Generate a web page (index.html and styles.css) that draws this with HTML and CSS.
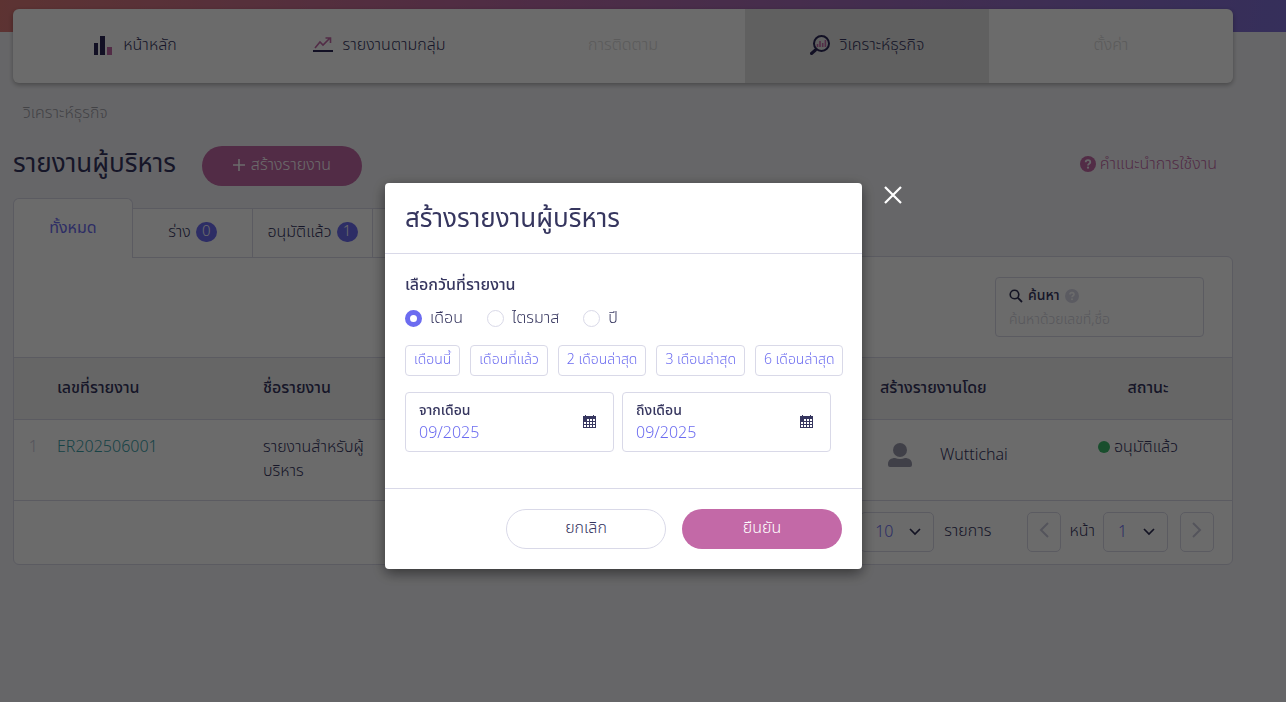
FILE: index.html
```html
<!DOCTYPE html>
<html lang="th">
<head>
  <meta charset="UTF-8" />
  <meta name="viewport" content="width=device-width, initial-scale=1.0"/>
  <title>รายงานผู้บริหาร</title>
  <link rel="stylesheet" href="styles.css">
</head>
<body>

  <div class="top-strip"></div>

  <div class="page">
    <nav class="main-nav">
      <a href="#" class="nav-item">
        <svg width="20" height="20" viewBox="0 0 20 20"><path fill="#2c2757" d="M1 8h4v12H1zM7 1h5v19H7z"/><path fill="#c369a7" d="M14 12h5v8h-5z"/></svg>
        <span>หน้าหลัก</span>
      </a>
      <a href="#" class="nav-item">
        <svg width="20" height="20" viewBox="0 0 20 20"><path fill="none" stroke="#c369a7" stroke-width="1.6" d="M2 13l5-6 3 3 7-7M12.500 3H17.500V8"/><path stroke="#2c2757" stroke-width="2" d="M0 16h20"/></svg>
        <span>รายงานตามกลุ่ม</span>
      </a>
      <a href="#" class="nav-item disabled"><span>การติดตาม</span></a>
      <a href="#" class="nav-item active">
        <svg width="20" height="20" viewBox="0 0 20 20"><circle cx="11.500" cy="8.500" r="7.500" fill="none" stroke="#2c2757" stroke-width="2"/><path stroke="#2c2757" stroke-width="3" stroke-linecap="round" d="M5.500 15L1.500 18.500"/><path stroke="#c369a7" stroke-width="1.600" d="M7.500 12V9M10 12V6M12.700 12V8M15.400 12V5"/></svg>
        <span>วิเคราะห์ธุรกิจ</span>
      </a>
      <a href="#" class="nav-item disabled"><span>ตั้งค่า</span></a>
    </nav>

    <div class="breadcrumb">วิเคราะห์ธุรกิจ</div>

    <div class="title-row">
      <h1>รายงานผู้บริหาร</h1>
      <button class="btn btn-pink">
        <svg width="12" height="12" viewBox="0 0 12 12"><path stroke="#fff" stroke-width="1.600" d="M6 0v12M0 6h12"/></svg>
        สร้างรายงาน
      </button>
      <a href="#" class="help-link">
        <svg width="16" height="16" viewBox="0 0 16 16"><circle cx="8" cy="8" r="8" fill="#c369a7"/><path fill="none" stroke="#f4f4f8" stroke-width="1.800" d="M5.700 6.200C5.700 3.500 10.300 3.500 10.300 6.200 10.300 7.800 8 7.700 8 9.400"/><circle cx="8" cy="11.700" r="1.100" fill="#f4f4f8"/></svg>
        คำแนะนำการใช้งาน
      </a>
    </div>

    <div class="tabs">
      <button class="tab selected">ทั้งหมด</button>
      <button class="tab">ร่าง <span class="count">0</span></button>
      <button class="tab">อนุมัติแล้ว <span class="count">1</span></button>
      <button class="tab" aria-label="tab"></button>
    </div>

    <div class="panel">
      <div class="panel-top">
        <div class="search-box">
          <label for="search">
            <svg width="14" height="14" viewBox="0 0 14 14"><circle cx="5.500" cy="5.500" r="4.300" fill="none" stroke="#2f2f55" stroke-width="1.600"/><path stroke="#2f2f55" stroke-width="1.800" d="M8.700 8.700L13 13"/></svg>
            ค้นหา
            <svg width="14" height="14" viewBox="0 0 16 16"><circle cx="8" cy="8" r="8" fill="#d9d9e8"/><path fill="none" stroke="#fff" stroke-width="1.800" d="M5.700 6.200C5.700 3.500 10.300 3.500 10.300 6.200 10.300 7.800 8 7.700 8 9.400"/><circle cx="8" cy="11.700" r="1.100" fill="#fff"/></svg>
          </label>
          <input type="text" id="search" placeholder="ค้นหาด้วยเลขที่,ชื่อ" />
        </div>
      </div>

      <table>
        <colgroup>
          <col class="col-no"><col class="col-code"><col class="col-name"><col><col class="col-user"><col class="col-status">
        </colgroup>
        <thead>
          <tr>
            <th></th>
            <th>เลขที่รายงาน</th>
            <th>ชื่อรายงาน</th>
            <th></th>
            <th>สร้างรายงานโดย</th>
            <th class="center">สถานะ</th>
          </tr>
        </thead>
        <tbody>
          <tr>
            <td class="row-no">1</td>
            <td><a href="#" class="code">ER202506001</a></td>
            <td>รายงานสำหรับผู้<wbr>บริหาร</td>
            <td></td>
            <td>
              <div class="user">
                <svg width="24" height="24" viewBox="0 0 24 24"><circle cx="12" cy="7" r="7" fill="#9a9aad"/><path fill="#9a9aad" d="M0 22V21C0 17 3 15 7 15Q12 17 17 15C21 15 24 17 24 21V22Q24 24 22 24H2Q0 24 0 22Z"/></svg>
                <span>Wuttichai</span>
              </div>
            </td>
            <td class="status-cell"><span class="status"><i class="dot"></i>อนุมัติแล้ว</span></td>
          </tr>
        </tbody>
      </table>

      <div class="pager">
        <span class="select-wrap">
          <select class="per-page" aria-label="รายการ"><option>10</option></select>
          <svg width="12" height="8" viewBox="0 0 12 8"><path fill="none" stroke="#2f2f55" stroke-width="1.700" d="M1 1l5 5 5-5"/></svg>
        </span>
        <span class="pager-text">รายการ</span>
        <button class="page-btn" aria-label="prev"><svg width="10" height="16" viewBox="0 0 10 16"><path fill="none" stroke="#c9c9da" stroke-width="2" d="M9 1L2 8l7 7"/></svg></button>
        <label for="page">หน้า</label>
        <span class="select-wrap">
          <select id="page"><option>1</option></select>
          <svg width="12" height="8" viewBox="0 0 12 8"><path fill="none" stroke="#2f2f55" stroke-width="1.700" d="M1 1l5 5 5-5"/></svg>
        </span>
        <button class="page-btn next" aria-label="next"><svg width="10" height="16" viewBox="0 0 10 16"><path fill="none" stroke="#c9c9da" stroke-width="2" d="M1 1l7 7-7 7"/></svg></button>
      </div>
    </div>
  </div>

  <div class="overlay">
    <div class="modal" role="dialog">
      <button class="close" aria-label="close"><svg width="18" height="18" viewBox="0 0 18 18"><path stroke="#fff" stroke-width="2.200" d="M1 1l16 16M17 1L1 17"/></svg></button>
      <div class="modal-header"><h2>สร้างรายงานผู้บริหาร</h2></div>
      <div class="modal-body">
        <h3>เลือกวันที่รายงาน</h3>
        <div class="radios">
          <label><input type="radio" name="period" checked /> เดือน</label>
          <label><input type="radio" name="period" /> ไตรมาส</label>
          <label><input type="radio" name="period" /> ปี</label>
        </div>
        <div class="presets">
          <button>เดือนนี้</button>
          <button>เดือนที่แล้ว</button>
          <button>2 เดือนล่าสุด</button>
          <button>3 เดือนล่าสุด</button>
          <button>6 เดือนล่าสุด</button>
        </div>
        <div class="dates">
          <div class="date-box">
            <div>
              <label for="from">จากเดือน</label>
              <input type="text" id="from" value="09/2025" />
            </div>
            <svg width="13" height="14" viewBox="0 0 13 14"><path fill="#36365f" d="M0 1h2V0h1v1h7V0h1v1h2v12H0z"/><path fill="#fff" d="M4 4h2v2H4zM7 4h2v2H7zM10 4h2v2h-2zM1 7h2v2H1zM4 7h2v2H4zM7 7h2v2H7zM10 7h2v2h-2zM1 10h2v2H1zM4 10h2v2H4zM7 10h2v2H7zM10 10h2v2h-2z"/></svg>
          </div>
          <div class="date-box">
            <div>
              <label for="to">ถึงเดือน</label>
              <input type="text" id="to" value="09/2025" />
            </div>
            <svg width="13" height="14" viewBox="0 0 13 14"><path fill="#36365f" d="M0 1h2V0h1v1h7V0h1v1h2v12H0z"/><path fill="#fff" d="M4 4h2v2H4zM7 4h2v2H7zM10 4h2v2h-2zM1 7h2v2H1zM4 7h2v2H4zM7 7h2v2H7zM10 7h2v2h-2zM1 10h2v2H1zM4 10h2v2H4zM7 10h2v2H7zM10 10h2v2h-2z"/></svg>
          </div>
        </div>
      </div>
      <div class="modal-footer">
        <button class="btn btn-line">ยกเลิก</button>
        <button class="btn btn-pink">ยืนยัน</button>
      </div>
    </div>
  </div>

</body>
</html>
```
FILE: styles.css
```css
* {
  box-sizing: border-box;
}

body {
  margin: 0;
  min-height: 100vh;
  background: #f4f4f8;
  color: #36365f;
  font-family: "Noto Sans Thai", "Noto Sans", sans-serif;
  font-size: 16px;
  font-weight: 300;
  line-height: 24px;
}

a {
  color: inherit;
  text-decoration: none;
}

h1, h2, h3 {
  margin: 0;
}

button, input, select {
  font: inherit;
  color: inherit;
}

button {
  cursor: pointer;
  padding: 0;
  background: #fff;
  border: 1px solid #d9d9e8;
}

.top-strip {
  height: 32px;
  background: linear-gradient(100deg, #dd7a78, #bc6aa5 40%, #8070d8);
}

.page {
  margin: -23px 53px 0 13px;
}

/* main menu */
.main-nav {
  display: flex;
  height: 74px;
  background: #fff;
  border-radius: 6px;
  overflow: hidden;
  box-shadow: 0 2px 5px rgba(0,0,0,0.3);
}

.nav-item {
  flex: 1;
  display: flex;
  justify-content: center;
  align-items: center;
  gap: 10px;
  padding-bottom: 2px;
}

.nav-item.active {
  background: #e5e5e5;
}

.nav-item.disabled {
  color: #d9d9d9;
}

.breadcrumb {
  margin: 18px 10px 0;
  color: #a0a0a8;
}

.title-row {
  display: flex;
  align-items: center;
  margin-top: 21px;
}

h1, h2 {
  font-size: 26px;
  font-weight: 400;
  line-height: 36px;
}

h1 {
  padding-bottom: 4px;
}

.title-row .btn {
  margin-left: 26px;
}

.help-link {
  display: flex;
  align-items: center;
  gap: 4px;
  margin: 0 16px 0 auto;
  padding-bottom: 4px;
  color: #c369a7;
}

.btn {
  display: flex;
  justify-content: center;
  align-items: center;
  gap: 6px;
  width: 160px;
  height: 40px;
  padding-bottom: 2px;
  border-radius: 20px;
}

.btn-pink {
  background: #c369a7;
  border: none;
  color: #fff;
}

/* tabs */
.tabs {
  position: relative;
  z-index: 1;
  display: flex;
  align-items: flex-end;
  margin-top: 12px;
}

.tab {
  display: flex;
  justify-content: center;
  align-items: center;
  gap: 5px;
  width: 120px;
  height: 50px;
  padding-bottom: 2px;
  border-left: none;
}

.tab.selected {
  height: 60px;
  border: 1px solid #d9d9e8;
  border-bottom: none;
  border-radius: 6px 6px 0 0;
  color: #6c6cf0;
  font-weight: 400;
}

.count {
  width: 21px;
  border-radius: 10px;
  background: #6c6cf0;
  color: #fff;
  font-size: 15px;
  line-height: 20px;
  text-align: center;
}

.panel {
  margin-top: -2px;
  background: #fff;
  border: 1px solid #d9d9e8;
  border-radius: 0 6px 6px 6px;
}

.panel-top {
  display: flex;
  justify-content: flex-end;
  padding: 20px 28px;
}

.search-box {
  width: 209px;
  height: 60px;
  padding: 6px 13px;
  border: 1px solid #d9d9e8;
  border-radius: 4px;
}

.search-box label {
  display: flex;
  align-items: center;
  gap: 5px;
  font-size: 14px;
  font-weight: 500;
}

.search-box input {
  display: block;
  width: 100%;
  height: 24px;
  padding: 0;
  border: none;
  outline: none;
  font-size: 14px;
}

.search-box input::placeholder {
  color: #d0d0da;
}

table {
  width: 100%;
  table-layout: fixed;
  border-collapse: collapse;
}

.col-no { width: 33px; }
.col-code { width: 206px; }
.col-name { width: 130px; }
.col-user { width: 194px; }
.col-status { width: 168px; }

th, td {
  padding: 15px 10px;
  border-top: 1px solid #d9d9e8;
  text-align: left;
  vertical-align: top;
}

th {
  height: 62px;
  padding: 12px 10px 14px;
  background: #f4f4f4;
  font-weight: 500;
  vertical-align: middle;
}

td {
  height: 80px;
}

.center {
  text-align: center;
}

.row-no {
  padding-right: 9px;
  color: #c9c9da;
  text-align: right;
}

.code {
  color: #3aa0a8;
}

.user {
  display: flex;
  align-items: center;
  gap: 28px;
  padding: 8px;
}

.status-cell {
  padding-right: 30px;
  text-align: center;
}

.status {
  display: inline-flex;
  align-items: center;
  gap: 4px;
}

.dot {
  width: 12px;
  height: 12px;
  border-radius: 50%;
  background: #3cb96c;
}

.pager {
  display: flex;
  justify-content: flex-end;
  align-items: center;
  gap: 8px;
  height: 64px;
  padding: 0 18px;
  border-top: 1px solid #d9d9e8;
}

.pager-text {
  margin: 0 28px 0 2px;
}

.pager-text, .pager label {
  padding-bottom: 2px;
}

.select-wrap {
  display: flex;
  align-items: center;
}

.select-wrap svg {
  margin-left: -25px;
  margin-right: 13px;
  pointer-events: none;
}

select {
  width: 65px;
  height: 40px;
  padding: 0 14px;
  appearance: none;
  background: #fff;
  border: 1px solid #d9d9e8;
  border-radius: 5px;
  color: #6c6cf0;
}

.per-page {
  width: 74px;
}

.page-btn {
  display: flex;
  justify-content: center;
  align-items: center;
  width: 34px;
  height: 40px;
  padding-bottom: 4px;
  border-radius: 5px;
}

.next {
  margin-left: 4px;
}

/* create report dialog */
.overlay {
  position: fixed;
  inset: 0;
  z-index: 10;
  display: flex;
  justify-content: center;
  align-items: flex-start;
  padding: 183px 39px 0 0;
  background: rgba(0,0,0,0.58);
}

.modal {
  position: relative;
  width: 477px;
  background: #fff;
  border-radius: 4px;
  box-shadow: 0 4px 14px rgba(0,0,0,0.5);
}

.close {
  position: absolute;
  top: 3px;
  right: -40px;
  display: flex;
  background: none;
  border: none;
}

.modal-header {
  padding: 18px 20px 16px;
  border-bottom: 1px solid #d9d9e8;
}

.modal-body {
  padding: 19px 20px 36px;
}

h3 {
  font-size: 16px;
  font-weight: 500;
  line-height: 24px;
}

.radios {
  display: flex;
  gap: 24px;
  margin-top: 9px;
}

.radios label {
  display: flex;
  align-items: center;
  gap: 8px;
}

.radios input {
  width: 17px;
  height: 17px;
  margin: 0;
  appearance: none;
  border: 1px solid #d9d9e8;
  border-radius: 50%;
}

.radios input:checked {
  border: 5px solid #6c6cf0;
}

.presets {
  display: flex;
  gap: 10px;
  margin-top: 15px;
}

.presets button {
  height: 31px;
  padding: 0 8px 2px;
  border-radius: 4px;
  color: #6c6cf0;
  font-size: 14px;
  white-space: nowrap;
}

.dates {
  display: flex;
  gap: 8px;
  margin-top: 16px;
}

.date-box {
  display: flex;
  align-items: center;
  justify-content: space-between;
  width: 209px;
  height: 60px;
  padding: 0 17px 0 13px;
  border: 1px solid #d9d9e8;
  border-radius: 4px;
}

.date-box label {
  display: block;
  font-size: 14px;
  font-weight: 500;
  line-height: 22px;
}

.date-box input {
  display: block;
  width: 120px;
  height: 22px;
  padding: 0;
  border: none;
  outline: none;
  color: #6c6cf0;
}

.modal-footer {
  display: flex;
  justify-content: flex-end;
  gap: 16px;
  padding: 20px;
  border-top: 1px solid #d9d9e8;
}
```
